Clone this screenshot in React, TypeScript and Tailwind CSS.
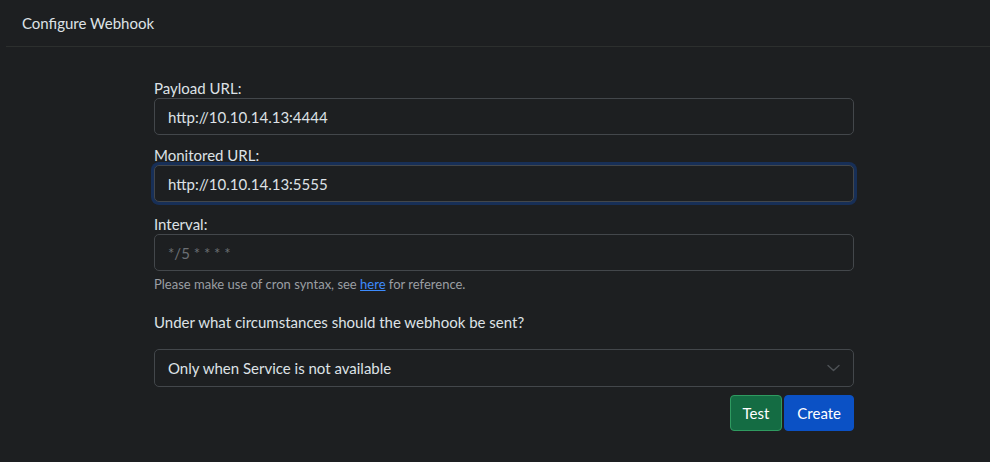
const label = "block text-[15px] leading-[20px] text-[#dee2e6]";
const input =
  "block w-full h-[37px] rounded-[5px] border border-[#43474b] bg-[#1d1f21] px-[13px] text-[15px] text-[#dee2e6] outline-none";

export default function App() {
  return (
    <div className="min-h-[462px] w-[990px] bg-[#1d1f21] font-['Lato',sans-serif] text-[#dee2e6]">
      <div className="ml-[6px] flex h-[47px] items-center border-b border-[#2c2f2e] pl-[16px] text-[15px]">
        Configure Webhook
      </div>
      <div className="ml-[154px] w-[700px] pt-[31px]">
        <label className={label}>Payload URL:</label>
        <input className={input} defaultValue="http://10.10.14.13:4444" />
        <label className={`${label} mt-[10px]`}>Monitored URL:</label>
        <input
          className={`${input} border-[#0b4fc0] shadow-[0_0_0_3px_rgba(13,78,190,0.35)]`}
          defaultValue="http://10.10.14.13:5555"
        />
        <label className={`${label} mt-[12px]`}>Interval:</label>
        <input className={`${input} placeholder:text-[#6c7075]`} placeholder="*/5 * * * *" />
        <p className="mt-[4px] text-[13px] leading-[18px] text-[#9a9ea3]">
          Please make use of cron syntax, see{" "}
          <a className="text-[#3d8bfd] underline" href="#">
            here
          </a>{" "}
          for reference.
        </p>
        <p className="mt-[19px] text-[15px] leading-[20px]">Under what circumstances should the webhook be sent?</p>
        <div className="relative mt-[17px]">
          <div className="flex h-[38px] items-center rounded-[5px] border border-[#43474b] px-[13px] text-[15px]">
            Only when Service is not available
          </div>
          <svg
            className="absolute right-[14px] top-[15px] h-[8px] w-[13px]"
            viewBox="0 0 13 8"
            fill="none"
            stroke="#4e5256"
            strokeWidth="1.4"
            strokeLinecap="round"
            strokeLinejoin="round"
          >
            <path d="M1 1.5l5.5 5 5.5-5" />
          </svg>
        </div>
        <div className="mt-[8px] flex justify-end gap-[2px]">
          <button className="h-[36px] rounded-[4px] border border-[#2f9a60] bg-[#146c43] px-[12px] text-[15px] text-white">
            Test
          </button>
          <button className="h-[36px] rounded-[4px] border border-[#0b51c5] bg-[#0b51c5] px-[12px] text-[15px] text-white">
            Create
          </button>
        </div>
      </div>
    </div>
  );
}
